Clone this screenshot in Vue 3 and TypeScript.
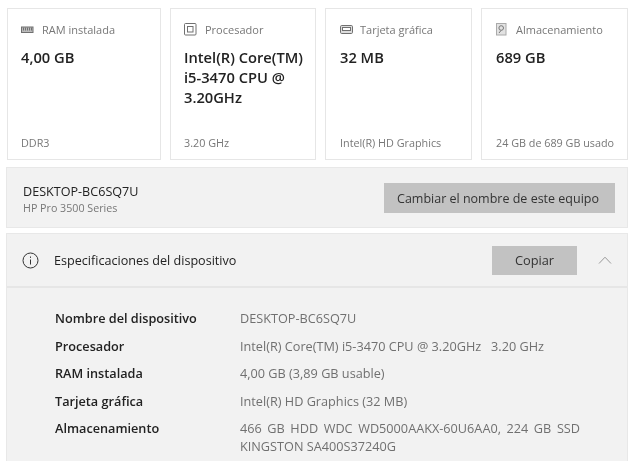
<script setup lang="ts">
interface Card {
  label: string
  value: string
  foot: string
  icon: string
}

const cards: Card[] = [
  { label: 'RAM instalada', value: '4,00 GB', foot: 'DDR3', icon: 'ram' },
  { label: 'Procesador', value: 'Intel(R) Core(TM) i5-3470 CPU @ 3.20GHz', foot: '3.20 GHz', icon: 'cpu' },
  { label: 'Tarjeta gráfica', value: '32 MB', foot: 'Intel(R) HD Graphics', icon: 'gpu' },
  { label: 'Almacenamiento', value: '689 GB', foot: '24 GB de 689 GB usado', icon: 'disk' },
]

const specs = [
  { name: 'Nombre del dispositivo', value: 'DESKTOP-BC6SQ7U' },
  { name: 'Procesador', value: 'Intel(R) Core(TM) i5-3470 CPU @ 3.20GHz\u00a0\u00a0 3.20 GHz' },
  { name: 'RAM instalada', value: '4,00 GB (3,89 GB usable)' },
  { name: 'Tarjeta gráfica', value: 'Intel(R) HD Graphics (32 MB)' },
  { name: 'Almacenamiento', value: '466 GB HDD WDC WD5000AAKX-60U6AA0, 224 GB SSD KINGSTON SA400S37240G' },
]
</script>

<template>
  <div class="page">
    <div class="cards">
      <div v-for="card in cards" :key="card.label" class="card">
        <div class="card-head">
          <svg class="icon" width="14" height="14" viewBox="0 0 14 14" fill="none" stroke="#707070" stroke-width="1">
            <template v-if="card.icon === 'ram'">
              <rect x="0.5" y="4" width="11.5" height="5.5" fill="#bbb" />
              <path d="M2.5 4.5v3M4.5 4.5v3M6.5 4.5v3M8.5 4.5v3M10.5 4.5v3" />
            </template>
            <template v-else-if="card.icon === 'cpu'">
              <rect x="0.5" y="0.5" width="11.5" height="11.5" rx="1" />
              <rect x="3.5" y="3.5" width="5.5" height="5.5" />
            </template>
            <template v-else-if="card.icon === 'gpu'">
              <rect x="0.5" y="2.5" width="12" height="8" rx="1.2" fill="#ddd" />
              <rect x="2.5" y="4.5" width="8" height="3" fill="#fff" />
            </template>
            <template v-else>
              <rect x="0.5" y="0.5" width="9.5" height="11.5" fill="#e2e2e2" stroke="#aaa" />
              <circle cx="5.2" cy="5" r="2.3" stroke="#777" />
              <path d="M5 7.5l-2 2.5" stroke="#777" />
            </template>
          </svg>
          <span class="card-label">{{ card.label }}</span>
        </div>
        <div class="card-value">{{ card.value }}</div>
        <div class="card-foot">{{ card.foot }}</div>
      </div>
    </div>

    <div class="pc-row">
      <div class="pc-text">
        <div class="pc-name">DESKTOP-BC6SQ7U</div>
        <div class="pc-model">HP Pro 3500 Series</div>
      </div>
      <button class="btn rename">Cambiar el nombre de este equipo</button>
    </div>

    <div class="spec-panel">
      <div class="spec-head">
        <svg class="info" width="17" height="17" viewBox="0 0 17 17" fill="none" stroke="#333" stroke-width="1">
          <circle cx="8.5" cy="8.5" r="7.5" />
          <path d="M8.5 7.5v5M8.5 4.5v1.4" />
        </svg>
        <span class="spec-title">Especificaciones del dispositivo</span>
        <button class="btn copy">Copiar</button>
        <svg class="chevron" width="14" height="8" viewBox="0 0 14 8" fill="none" stroke="#999" stroke-width="1">
          <path d="M1 7.5L7 1.2l6 6.3" />
        </svg>
      </div>
      <div class="spec-list">
        <div v-for="spec in specs" :key="spec.name" class="spec-row">
          <div class="spec-name">{{ spec.name }}</div>
          <div class="spec-value">{{ spec.value }}</div>
        </div>
      </div>
    </div>
  </div>
</template>

<style scoped>
.page {
  width: 640px;
  height: 461px;
  overflow: hidden;
  box-sizing: border-box;
  padding: 8px 12px 0 6px;
  background: #fff;
  font-family: "Open Sans", "Noto Sans", sans-serif;
  color: #222;
  filter: blur(0.35px);
}

.cards {
  display: grid;
  grid-template-columns: 154px 146px 147px 147px;
  gap: 9px;
  padding-left: 1px;
}

.card {
  height: 152px;
  box-sizing: border-box;
  display: flex;
  flex-direction: column;
  padding: 12px 10px 9px 13px;
  background: #fff;
  border: 1px solid #e6e6e6;
}

.card:nth-child(n + 3) {
  padding-left: 14px;
}

.card-head {
  display: flex;
  align-items: center;
  gap: 7px;
  height: 16px;
}

.card:nth-child(n + 3) .card-head {
  gap: 6px;
}

.icon {
  flex: none;
  margin-top: 2px;
}

.card-label {
  font-size: 11px;
  color: #777;
}

.card-value {
  margin-top: 10px;
  font-size: 14.7px;
  line-height: 20px;
  font-weight: 600;
  color: #222;
}

.card-foot {
  margin-top: auto;
  font-size: 10.8px;
  line-height: 14px;
  color: #777;
}

.pc-row {
  margin-top: 7px;
  height: 61px;
  box-sizing: border-box;
  display: flex;
  align-items: center;
  justify-content: space-between;
  padding: 0 12px 0 16px;
  background: #f2f2f2;
  border: 1px solid #e8e8e8;
}

.pc-text {
  padding-top: 3px;
}

.pc-name {
  font-size: 12.6px;
  line-height: 17px;
}

.pc-model {
  margin-top: 1px;
  font-size: 10.7px;
  line-height: 14px;
  color: #777;
}

.btn {
  border: none;
  background: #c2c2c2;
  font-family: inherit;
  font-size: 12.5px;
  color: #333;
  padding: 0;
}

.rename {
  width: 231px;
  height: 30px;
  padding: 1px 3px 0 0;
}

.spec-panel {
  margin-top: 5px;
  height: 240px;
  box-sizing: border-box;
  background: #f2f2f2;
  border: 1px solid #e8e8e8;
  border-bottom: none;
}

.spec-head {
  height: 54px;
  box-sizing: border-box;
  display: flex;
  align-items: center;
  padding: 0 15px 0 15px;
  border-bottom: 2px solid #e6e6e6;
}

.info {
  flex: none;
}

.spec-title {
  flex: 1;
  margin-left: 15px;
  margin-top: 1px;
  font-size: 12.6px;
}

.copy {
  width: 85px;
  height: 29px;
  font-size: 12.8px;
}

.chevron {
  margin-left: 21px;
  flex: none;
}

.spec-list {
  padding-top: 22.4px;
  padding-left: 48px;
}

.spec-row {
  display: flex;
  margin-bottom: 10px;
  line-height: 17.5px;
  font-size: 12.7px;
}

.spec-name {
  width: 185px;
  flex: none;
  font-weight: 600;
  color: #222;
}

.spec-value {
  width: 340px;
  color: #707070;
  text-align: justify;
}
</style>
